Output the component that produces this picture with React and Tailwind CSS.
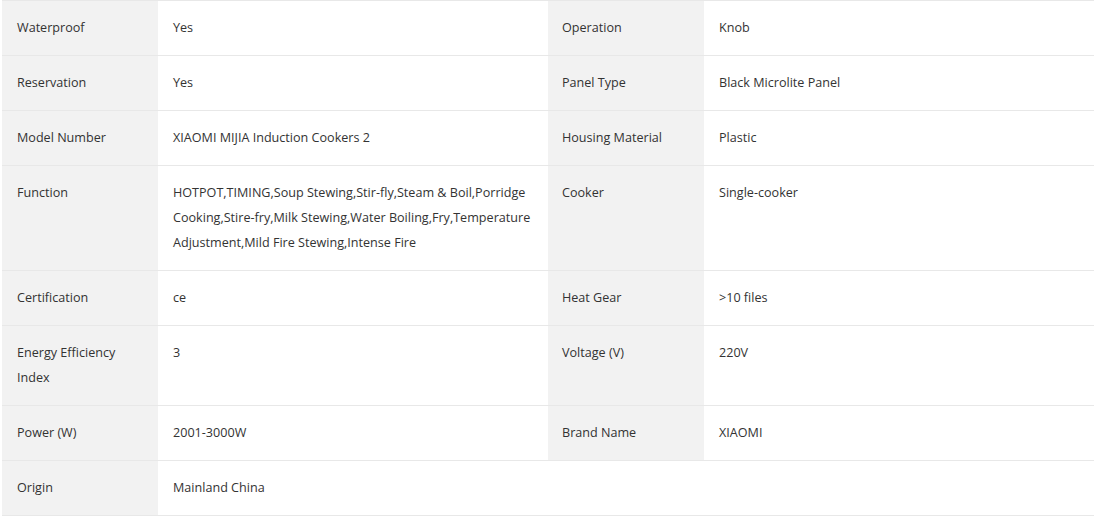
import React from "react";

const rows = [
  ["Waterproof", "Yes", "Operation", "Knob"],
  ["Reservation", "Yes", "Panel Type", "Black Microlite Panel"],
  ["Model Number", "XIAOMI MIJIA Induction Cookers 2", "Housing Material", "Plastic"],
  [
    "Function",
    "HOTPOT,TIMING,Soup Stewing,Stir-fly,Steam & Boil,Porridge Cooking,Stire-fry,Milk Stewing,Water Boiling,Fry,Temperature Adjustment,Mild Fire Stewing,Intense Fire",
    "Cooker",
    "Single-cooker",
  ],
  ["Certification", "ce", "Heat Gear", ">10 files"],
  ["Energy Efficiency Index", "3", "Voltage (V)", "220V"],
  ["Power (W)", "2001-3000W", "Brand Name", "XIAOMI"],
  ["Origin", "Mainland China", null, null],
];

export default function App() {
  return (
    <div className="min-h-screen bg-white pl-[2px] pr-[4px] font-['Open_Sans',sans-serif] text-[12.6px] leading-[25px] text-[#333]">
      <div className="w-[1092px] border-t border-[#e8e8e8]">
        {rows.map((r, i) => (
          <div key={i} className="flex border-b border-[#e8e8e8]">
            <div className="w-[156px] shrink-0 bg-[#f2f2f2] pl-[15px] pr-[10px] pt-[14px] pb-[15px]">
              {r[0]}
            </div>
            <div className="w-[390px] shrink-0 pl-[15px] pr-[15px] pt-[14px] pb-[15px]">
              {r[1]}
            </div>
            <div
              className={
                "w-[156px] shrink-0 pl-[14px] pr-[10px] pt-[14px] pb-[15px] " +
                (r[2] ? "bg-[#f2f2f2]" : "bg-white")
              }
            >
              {r[2]}
            </div>
            <div className="w-[390px] shrink-0 pl-[15px] pr-[15px] pt-[14px] pb-[15px]">
              {r[3]}
            </div>
          </div>
        ))}
      </div>
    </div>
  );
}
